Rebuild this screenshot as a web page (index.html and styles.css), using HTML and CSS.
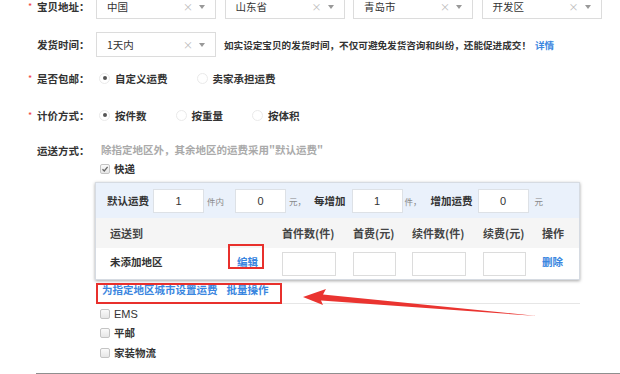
FILE: index.html
```html
<html lang="zh-CN">
<head>
    <meta charset="UTF-8">
    <title>运费模板</title>
    <link rel="stylesheet" href="styles.css">
</head>
<body>
    <div class="form">
        <div class="row row-addr">
            <span class="req">*</span>
            <span class="label">宝贝地址：</span>
            <div class="selects">
                <div class="select"><span class="val">中国</span><span class="clear">×</span><span class="caret"></span></div>
                <div class="select"><span class="val">山东省</span><span class="clear">×</span><span class="caret"></span></div>
                <div class="select"><span class="val">青岛市</span><span class="clear">×</span><span class="caret"></span></div>
                <div class="select"><span class="val">开发区</span><span class="clear">×</span><span class="caret"></span></div>
            </div>
        </div>

        <div class="row row-time">
            <span class="req"></span>
            <span class="label">发货时间：</span>
            <div class="select"><span class="val">1天内</span><span class="clear">×</span><span class="caret"></span></div>
            <span class="tip">如实设定宝贝的发货时间，不仅可避免发货咨询和纠纷，还能促进成交！<a class="link">详情</a></span>
        </div>

        <div class="row row-radio">
            <span class="req">*</span>
            <span class="label">是否包邮：</span>
            <div class="options">
                <label class="opt"><span class="radio on"></span>自定义运费</label>
                <label class="opt"><span class="radio"></span>卖家承担运费</label>
            </div>
        </div>

        <div class="row row-radio row-price">
            <span class="req">*</span>
            <span class="label">计价方式：</span>
            <div class="options">
                <label class="opt"><span class="radio on"></span>按件数</label>
                <label class="opt"><span class="radio"></span>按重量</label>
                <label class="opt"><span class="radio"></span>按体积</label>
            </div>
        </div>

        <div class="row row-ship">
            <span class="req"></span>
            <span class="label">运送方式：</span>
            <div class="ship">
                <div class="muted">除指定地区外，其余地区的运费采用"默认运费"</div>
                <label class="check"><span class="cb on"><svg width="8" height="8" viewBox="0 0 8 8"><path d="M1.5 4.2 L3.3 6 L6.6 1.8" fill="none" stroke="#666" stroke-width="1.3"/></svg></span>快递</label>

                <div class="ship-table">
                    <div class="tbar">
                        <b>默认运费</b>
                        <span class="num n1">1</span>
                        <span class="unit u1">件内</span>
                        <span class="num n2">0</span>
                        <span class="unit u2">元，</span>
                        <b class="b2">每增加</b>
                        <span class="num n3">1</span>
                        <span class="unit u3">件，</span>
                        <b class="b3">增加运费</b>
                        <span class="num n4">0</span>
                        <span class="unit u4">元</span>
                    </div>
                    <div class="grid head">
                        <span>运送到</span>
                        <span></span>
                        <span>首件数(件)</span>
                        <span>首费(元)</span>
                        <span>续件数(件)</span>
                        <span>续费(元)</span>
                        <span>操作</span>
                    </div>
                    <div class="grid body">
                        <span class="txt">未添加地区</span>
                        <a class="link txt edit">编辑</a>
                        <span><span class="box wide"></span></span>
                        <span><span class="box"></span></span>
                        <span><span class="box wide"></span></span>
                        <span><span class="box"></span></span>
                        <a class="link txt">删除</a>
                    </div>
                </div>

                <div class="links">
                    <a class="link">为指定地区城市设置运费</a>
                    <a class="link">批量操作</a>
                </div>

                <label class="check item"><span class="cb"></span><span class="latin">EMS</span></label>
                <label class="check item"><span class="cb"></span>平邮</label>
                <label class="check item"><span class="cb"></span>家装物流</label>
            </div>
        </div>

        <div class="rule"></div>
    </div>

    <svg class="marks" width="620" height="374" viewBox="0 0 620 374">
        <rect x="229" y="245" width="34" height="23" fill="none" stroke="#e8302c" stroke-width="2"/>
        <rect x="97" y="284" width="184" height="19" fill="none" stroke="#e8302c" stroke-width="2"/>
        <polygon points="303,297 326,289 323,294.5 537,316 321,300.5 323,305" fill="#ea3430"/>
    </svg>
</body>
</html>
```

FILE: styles.css
```css
body {
    margin: 0;
    width: 620px;
    height: 374px;
    overflow: hidden;
    background: #fff;
    color: #333;
    font-family: "Noto Sans CJK SC", "Liberation Sans", sans-serif;
    font-size: 10.5px;
    position: relative;
}

.form {
    padding-left: 28px;
    margin-top: -6px;
}

.row {
    display: flex;
    align-items: center;
}

.req {
    width: 9px;
    color: #f04040;
    font-size: 9px;
    line-height: 1;
}

.label {
    width: 59px;
    font-weight: bold;
    white-space: nowrap;
}

/* selects */
.selects {
    display: flex;
    gap: 8.5px;
}

.select {
    width: 120px;
    height: 25px;
    box-sizing: border-box;
    border: 1px solid #dcdcdc;
    display: flex;
    align-items: center;
    padding: 0 10px;
    background: #fff;
}

.select .val {
    flex: 1;
}

.select .clear {
    color: #bbb;
    font-size: 10px;
    margin-right: 6px;
}

.select .caret {
    width: 0;
    height: 0;
    border-left: 3.5px solid transparent;
    border-right: 3.5px solid transparent;
    border-top: 4px solid #999;
}

.row-time {
    margin-top: 13px;
}

.tip {
    margin-left: 8px;
    font-weight: bold;
    font-size: 9.6px;
    white-space: nowrap;
}

.link {
    color: #3a86e0;
    text-decoration: none;
    font-weight: bold;
}

.tip .link {
    margin-left: 4px;
}

/* radios */
.row-radio {
    height: 20px;
    margin-top: 11px;
}

.row-price {
    margin-top: 17px;
}

.options {
    display: flex;
    gap: 29px;
    padding-left: 3px;
}

.opt {
    display: flex;
    align-items: center;
    gap: 5px;
    font-weight: bold;
}

.radio {
    width: 11px;
    height: 11px;
    box-sizing: border-box;
    border: 1px solid #eaeaea;
    border-radius: 50%;
    display: flex;
    align-items: center;
    justify-content: center;
}

.radio.on::after {
    content: "";
    width: 4px;
    height: 4px;
    border-radius: 50%;
    background: #555;
}

/* shipping */
.row-ship {
    align-items: flex-start;
    margin-top: 16px;
}

.row-ship .label {
    line-height: 20px;
}

.ship {
    width: 484px;
    display: flex;
    flex-direction: column;
}

.muted {
    color: #aaa;
    line-height: 18px;
    padding-left: 5px;
    font-weight: bold;
}

.check {
    display: flex;
    align-items: center;
    gap: 4px;
    padding-left: 4px;
    font-weight: bold;
    line-height: 18px;
    margin-top: 1px;
}

.cb {
    width: 8px;
    height: 8px;
    border: 1px solid #c4c4c4;
    border-radius: 2px;
    background: linear-gradient(#fafafa, #e6e6e6);
    display: flex;
    align-items: center;
    justify-content: center;
}

.cb svg {
    display: block;
}

.ship-table {
    margin-top: 4px;
    margin-left: -1px;
    border: 1px solid #d6dbe2;
    box-shadow: 0 1px 3px rgba(0, 0, 0, 0.35);
}

.tbar {
    height: 35px;
    background: #eaf1fb;
    display: flex;
    align-items: center;
    padding-left: 11px;
    white-space: nowrap;
}

.tbar b {
    font-weight: bold;
}

.num {
    width: 51px;
    height: 24px;
    box-sizing: border-box;
    border: 1px solid #dde1e6;
    background: #fff;
    display: flex;
    align-items: center;
    justify-content: center;
    font-size: 11px;
    font-family: "Liberation Sans", sans-serif;
}

.unit {
    color: #888;
    font-size: 8.5px;
}

.n1 { margin-left: 4px; }
.u1 { margin-left: 3px; }
.n2 { margin-left: 11px; }
.u2 { margin-left: 3px; }
.b2 { margin-left: 8px; }
.n3 { margin-left: 6px; }
.u3 { margin-left: 2px; }
.b3 { margin-left: 9px; }
.n4 { margin-left: 5px; }
.u4 { margin-left: 6px; }

.grid {
    display: grid;
    grid-template-columns: 119px 53px 71px 59px 71px 59px 1fr;
    align-items: center;
    padding-left: 14px;
}

.grid.head {
    height: 30px;
    background: #f5f5f5;
    font-size: 11px;
    font-weight: bold;
    color: #444;
}

.grid.body {
    height: 31px;
    background: #fff;
    font-weight: bold;
}

.grid.body .txt {
    padding-bottom: 5px;
}

.edit {
    padding-left: 8px;
}

.box {
    display: block;
    width: 43px;
    height: 24px;
    box-sizing: border-box;
    border: 1px solid #dcdcdc;
    background: #fff;
}

.box.wide {
    width: 54px;
}

.links {
    margin-top: 4px;
    height: 19px;
    border-bottom: 1px solid #e6e6e6;
    display: flex;
    gap: 9px;
    padding-left: 6px;
    line-height: 12px;
}

.check.item {
    height: 19.5px;
    margin-top: 0;
}

.latin {
    font-family: "Liberation Sans", sans-serif;
    font-weight: normal;
    font-size: 11px;
}

.rule {
    margin-top: 10px;
    margin-left: 8px;
    height: 2px;
    background: #8f8f8f;
}

/* annotation overlay */
.marks {
    position: absolute;
    left: 0;
    top: 0;
    pointer-events: none;
}
```
